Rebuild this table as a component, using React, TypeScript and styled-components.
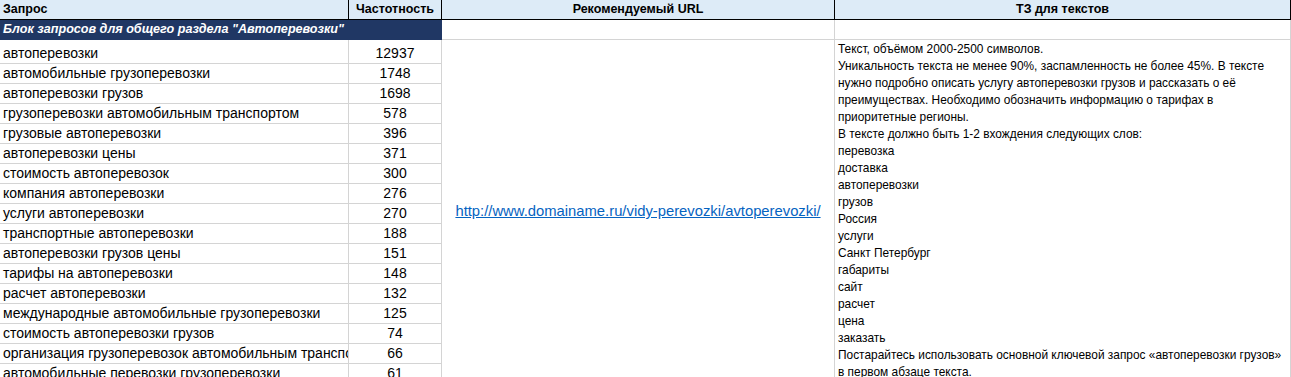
import React, { FC } from 'react'
import styled, { createGlobalStyle } from 'styled-components'

const GlobalStyle = createGlobalStyle`
  html, body {
    margin: 0;
    padding: 0;
    background: #fff;
    overflow: hidden;
  }
  body {
    font-family: 'Liberation Sans', Arial, sans-serif;
    color: #000;
  }
`

const queries: [string, number][] = [
  ['автоперевозки', 12937],
  ['автомобильные грузоперевозки', 1748],
  ['автоперевозки грузов', 1698],
  ['грузоперевозки автомобильным транспортом', 578],
  ['грузовые автоперевозки', 396],
  ['автоперевозки цены', 371],
  ['стоимость автоперевозок', 300],
  ['компания автоперевозки', 276],
  ['услуги автоперевозки', 270],
  ['транспортные автоперевозки', 188],
  ['автоперевозки грузов цены', 151],
  ['тарифы на автоперевозки', 148],
  ['расчет автоперевозки', 132],
  ['международные автомобильные грузоперевозки', 125],
  ['стоимость автоперевозки грузов', 74],
  ['организация грузоперевозок автомобильным транспортом', 66],
  ['автомобильные перевозки грузоперевозки', 61],
]

const brief = [
  'Текст, объёмом 2000-2500 символов.',
  'Уникальность текста не менее 90%, заспамленность не более 45%. В тексте',
  'нужно подробно описать услугу автоперевозки грузов и рассказать о её',
  'преимуществах. Необходимо обозначить информацию о тарифах в',
  'приоритетные регионы.',
  'В тексте должно быть 1-2 вхождения следующих слов:',
  'перевозка',
  'доставка',
  'автоперевозки',
  'грузов',
  'Россия',
  'услуги',
  'Санкт Петербург',
  'габариты',
  'сайт',
  'расчет',
  'цена',
  'заказать',
  'Постарайтесь использовать основной ключевой запрос «автоперевозки грузов»',
  'в первом абзаце текста.',
]

const Sheet = styled.div`
  display: grid;
  grid-template-columns: 349px 93px 393px 456px;
  grid-template-rows: 20px 20px 24px repeat(16, 20px);
  width: 1291px;
`

const Cell = styled.div<{ $align?: 'left' | 'center' }>`
  box-sizing: border-box;
  border-right: 1px solid #d4d4d4;
  border-bottom: 1px solid #d4d4d4;
  display: flex;
  align-items: flex-end;
  justify-content: ${(p) => (p.$align === 'center' ? 'center' : 'flex-start')};
  padding: 0 3px 1px;
  font-size: 14px;
  line-height: 17px;
  white-space: nowrap;
  overflow: hidden;
`

const QueryCell = styled(Cell)`
  grid-column: 1;
  padding-right: 0;
`

const FreqCell = styled(Cell)`
  grid-column: 2;
  justify-content: center;
`

const HeadCell = styled(Cell)`
  background: #ddebf7;
  border-right-color: #000;
  border-bottom-color: #000;
  font-weight: bold;
  font-size: 12.5px;
  align-items: center;
  padding-bottom: 0;
`

const GroupCell = styled(Cell)`
  grid-column: 1 / span 2;
  background: #203764;
  border-color: #203764;
  color: #fff;
  font-weight: bold;
  font-style: italic;
  font-size: 12.6px;
  align-items: center;
  padding-bottom: 0;
`

const UrlCell = styled(Cell)`
  grid-column: 3;
  grid-row: 3 / span 17;
  align-items: center;
  justify-content: center;
  padding-bottom: 0;
`

const Link = styled.a`
  color: #0563c1;
  text-decoration: underline;
  font-size: 14.8px;
`

const BriefCell = styled(Cell)`
  grid-column: 4;
  grid-row: 3 / span 17;
  display: block;
  border-bottom: none;
  padding: 1px 3px 0;
  font-size: 11.9px;
`

const BriefLine = styled.div`
  height: 17px;
  line-height: 17px;
  white-space: nowrap;
`

const App: FC = () => (
  <>
    <GlobalStyle />
    <Sheet>
      <HeadCell>Запрос</HeadCell>
      <HeadCell $align="center">Частотность</HeadCell>
      <HeadCell $align="center">Рекомендуемый URL</HeadCell>
      <HeadCell $align="center">ТЗ для текстов</HeadCell>

      <GroupCell>Блок запросов для общего раздела "Автоперевозки"</GroupCell>
      <Cell />
      <Cell />

      <UrlCell>
        <Link href="#">http://www.domainame.ru/vidy-perevozki/avtoperevozki/</Link>
      </UrlCell>
      <BriefCell>
        {brief.map((line, j) => (
          <BriefLine key={j}>{line}</BriefLine>
        ))}
      </BriefCell>

      {queries.map(([q, n]) => (
        <React.Fragment key={q}>
          <QueryCell>{q}</QueryCell>
          <FreqCell>{n}</FreqCell>
        </React.Fragment>
      ))}
    </Sheet>
  </>
)

export default App
